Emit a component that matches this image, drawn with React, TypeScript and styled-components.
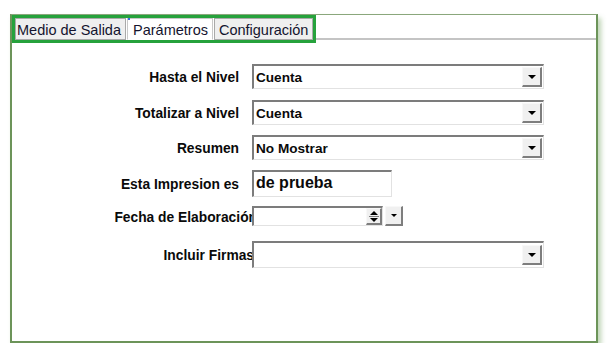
import React from "react";
import styled, { createGlobalStyle } from "styled-components";

const Global = createGlobalStyle`
  html, body { margin: 0; padding: 0; background: #ffffff; }
  body { font-family: "Liberation Sans", Arial, sans-serif; }
`;

const Page = styled.div`
  padding: 14px 0 0 10px;
`;

const Panel = styled.div`
  box-sizing: border-box;
  width: 588px;
  height: 329px;
  border: 2px solid #6c9459;
  border-top: 1px solid #8aa77c;
  background: #fff;
  box-shadow: 3px 4px 5px rgba(110, 160, 90, 0.45);
  display: flex;
  flex-direction: column;
`;

const TabBar = styled.div`
  display: flex;
  align-items: flex-end;
`;

const TabGroup = styled.div`
  display: flex;
  gap: 1px;
  border: 3px solid #26a23c;
  height: 22px;
`;

const Tab = styled.div<{ $active?: boolean; $padL?: number; $padR?: number }>`
  position: relative;
  box-sizing: border-box;
  height: 22px;
  padding: 1px ${(p) => p.$padR ?? 5}px 0 ${(p) => p.$padL ?? 5}px;
  display: flex;
  align-items: center;
  justify-content: center;
  font-size: 14.5px;
  color: #14142e;
  background: ${(p) => (p.$active ? "#ffffff" : "#efefef")};
  border: 1px solid ${(p) => (p.$active ? "#c8c8c8" : "#a9a9a9")};
  border-bottom-color: ${(p) => (p.$active ? "#ffffff" : "#a9a9a9")};
  white-space: nowrap;
  &::after {
    content: "";
    display: ${(p) => (p.$active ? "block" : "none")};
    position: absolute;
    left: 0;
    top: -1px;
    width: 2px;
    height: 2px;
    background: #3a6ee0;
  }
`;

const TabFiller = styled.div`
  flex: 1;
  border-bottom: 2px solid #c4c4c4;
  margin-bottom: 3px;
`;

const Form = styled.div`
  display: flex;
  flex-direction: column;
  padding-top: 21px;
`;

const Row = styled.div<{ $mb?: number }>`
  display: flex;
  align-items: center;
  margin-bottom: ${(p) => p.$mb ?? 10}px;
`;

const Label = styled.div<{ $clip?: boolean }>`
  box-sizing: border-box;
  width: 240px;
  flex: none;
  display: flex;
  justify-content: flex-end;
  overflow: hidden;
  padding-top: 2px;
  padding-right: ${(p) => (p.$clip ? 0 : 13)}px;
  font-size: 13.8px;
  line-height: 15px;
  font-weight: bold;
  color: #0a0a0a;
  white-space: nowrap;
`;

const LabelText = styled.span<{ $over?: number }>`
  flex: none;
  margin-right: ${(p) => -(p.$over ?? 0)}px;
`;

const Select = styled.div<{ $h?: number }>`
  box-sizing: border-box;
  width: 292px;
  height: ${(p) => p.$h ?? 25}px;
  display: flex;
  align-items: center;
  background: #fff;
  border-top: 2px solid #7c7c7c;
  border-left: 2px solid #7c7c7c;
  border-right: 1px solid #e2e2e2;
  border-bottom: 1px solid #e2e2e2;
`;

const Value = styled.div`
  flex: 1;
  padding: 1px 0 0 2px;
  font-size: 13.6px;
  line-height: 15px;
  font-weight: bold;
  color: #0a0a0a;
  white-space: nowrap;
`;

const DropButton = styled.div<{ $w?: number; $h?: number }>`
  box-sizing: border-box;
  flex: none;
  width: ${(p) => p.$w ?? 20}px;
  height: ${(p) => p.$h ?? 20}px;
  margin-right: 1px;
  background: #f0f0f0;
  border-top: 1px solid #f8f8f8;
  border-left: 1px solid #f8f8f8;
  border-right: 2px solid #7e7e7e;
  border-bottom: 2px solid #7e7e7e;
  display: flex;
  align-items: center;
  justify-content: center;
`;

const TextBox = styled.div`
  box-sizing: border-box;
  width: 140px;
  height: 27px;
  padding: 2px 0 0 2px;
  background: #fff;
  border-top: 2px solid #7c7c7c;
  border-left: 2px solid #7c7c7c;
  border-right: 1px solid #e2e2e2;
  border-bottom: 1px solid #e2e2e2;
  font-size: 16px;
  line-height: 18px;
  font-weight: bold;
  color: #0a0a0a;
`;

const DateGroup = styled.div`
  display: flex;
  align-items: flex-start;
  gap: 2px;
`;

const DateBox = styled.div`
  box-sizing: border-box;
  width: 131px;
  height: 20px;
  display: flex;
  justify-content: flex-end;
  background: #fff;
  border-top: 2px solid #7c7c7c;
  border-left: 2px solid #7c7c7c;
  border-right: 1px solid #e2e2e2;
  border-bottom: 1px solid #e2e2e2;
`;

const Spinner = styled.div`
  box-sizing: border-box;
  width: 16px;
  height: 17px;
  background: #f0f0f0;
  border-top: 1px solid #f8f8f8;
  border-left: 1px solid #f8f8f8;
  border-right: 2px solid #7e7e7e;
  border-bottom: 2px solid #7e7e7e;
  display: flex;
  align-items: center;
  justify-content: center;
`;

const Down = ({ w = 8, h = 4 }: { w?: number; h?: number }) => (
  <svg width={w} height={h} viewBox={`0 0 ${w} ${h}`}>
    <polygon points={`0,0 ${w},0 ${w / 2},${h}`} fill="#000" />
  </svg>
);

const UpDown = () => (
  <svg width="10" height="13" viewBox="0 0 10 13">
    <polygon points="1,5 9,5 5,1" fill="#000" />
    <rect x="0" y="6" width="10" height="1" fill="#7e7e7e" />
    <polygon points="1,8 9,8 5,12" fill="#000" />
  </svg>
);

export default function App() {
  return (
    <>
      <Global />
      <Page>
        <Panel>
          <TabBar>
            <TabGroup>
              <Tab $padL={1} $padR={4}>Medio de Salida</Tab>
              <Tab $active $padL={5} $padR={4}>Parámetros</Tab>
              <Tab $padL={4} $padR={4}>Configuración</Tab>
            </TabGroup>
            <TabFiller />
          </TabBar>
          <Form>
            <Row $mb={11}>
              <Label>
                <LabelText>Hasta el Nivel</LabelText>
              </Label>
              <Select>
                <Value>Cuenta</Value>
                <DropButton>
                  <Down />
                </DropButton>
              </Select>
            </Row>
            <Row>
              <Label>
                <LabelText>Totalizar a Nivel</LabelText>
              </Label>
              <Select>
                <Value>Cuenta</Value>
                <DropButton>
                  <Down />
                </DropButton>
              </Select>
            </Row>
            <Row>
              <Label>
                <LabelText>Resumen</LabelText>
              </Label>
              <Select>
                <Value>No Mostrar</Value>
                <DropButton>
                  <Down />
                </DropButton>
              </Select>
            </Row>
            <Row $mb={9}>
              <Label>
                <LabelText>Esta Impresion es</LabelText>
              </Label>
              <TextBox>de prueba</TextBox>
            </Row>
            <Row $mb={15}>
              <Label $clip>
                <LabelText $over={5}>Fecha de Elaboración</LabelText>
              </Label>
              <DateGroup>
                <DateBox>
                  <Spinner>
                    <UpDown />
                  </Spinner>
                </DateBox>
                <DropButton $w={18} $h={20}>
                  <Down w={6} h={3} />
                </DropButton>
              </DateGroup>
            </Row>
            <Row>
              <Label $clip>
                <LabelText $over={2}>Incluir Firmas</LabelText>
              </Label>
              <Select $h={27}>
                <Value />
                <DropButton>
                  <Down />
                </DropButton>
              </Select>
            </Row>
          </Form>
        </Panel>
      </Page>
    </>
  );
}
